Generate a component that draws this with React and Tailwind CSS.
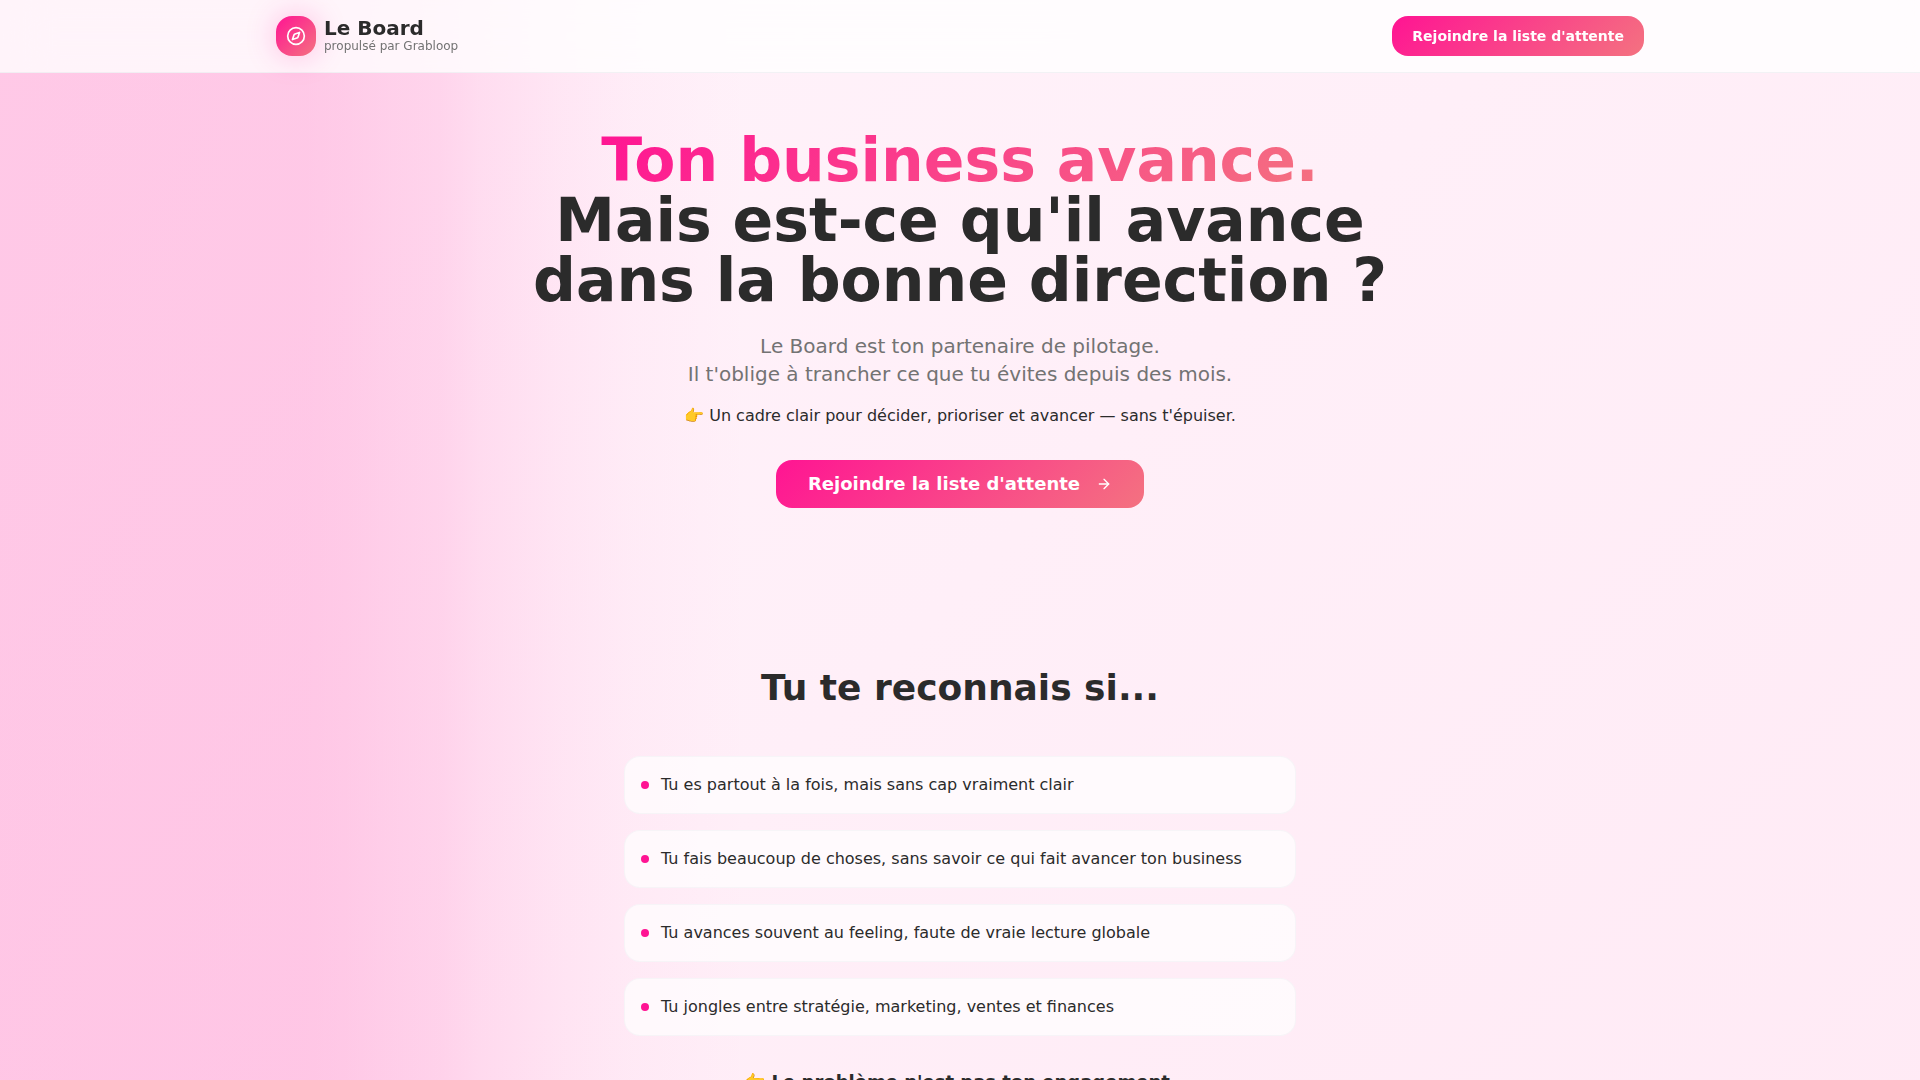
import { ArrowRight, Compass } from 'lucide-react';

const signs = [
  'Tu es partout à la fois, mais sans cap vraiment clair',
  'Tu fais beaucoup de choses, sans savoir ce qui fait avancer ton business',
  'Tu avances souvent au feeling, faute de vraie lecture globale',
  'Tu jongles entre stratégie, marketing, ventes et finances',
];

const Header = () => (
  <header className="fixed inset-x-0 top-0 z-10 border-b border-gray-200/50 bg-white/80 backdrop-blur-xl">
    <div className="mx-auto flex max-w-[1400px] items-center justify-between px-4 py-4">
      <a href="#top" className="flex items-center gap-2">
        <span className="flex h-10 w-10 items-center justify-center rounded-2xl bg-linear-135/srgb from-[#ff1493] to-[#f47280] text-white shadow-[0_0_30px_rgba(255,20,147,0.25)]">
          <Compass className="h-5 w-5" />
        </span>
        <span className="flex flex-col">
          <span className="text-xl leading-5 font-bold">Le Board</span>
          <span className="text-xs leading-4 text-[#737373]">propulsé par Grabloop</span>
        </span>
      </a>
      <button className="h-10 rounded-2xl bg-linear-135/srgb from-[#ff1493] to-[#f47280] px-5 text-sm font-bold text-white">
        Rejoindre la liste d'attente
      </button>
    </div>
  </header>
);

const Hero = () => (
  <section className="flex flex-col items-center px-4 pt-[130px] pb-20 text-center">
    <h1 className="mb-[22px] text-6xl leading-[60px] font-bold">
      <span className="bg-linear-135/srgb from-[#ff1493] to-[#f47280] bg-clip-text text-transparent">
        Ton business avance.
      </span>
      <br />
      Mais est-ce qu'il avance
      <br />
      dans la bonne direction ?
    </h1>
    <p className="mb-4 text-xl leading-7 text-[#737373]">
      Le Board est ton partenaire de pilotage.
      <br />
      Il t'oblige à trancher ce que tu évites depuis des mois.
    </p>
    <p className="mb-8 text-base">👉 Un cadre clair pour décider, prioriser et avancer — sans t'épuiser.</p>
    <button className="flex h-12 items-center gap-4 rounded-2xl bg-linear-135/srgb from-[#ff1493] to-[#f47280] px-8 text-lg font-bold text-white">
      Rejoindre la liste d'attente
      <ArrowRight className="h-4 w-4" />
    </button>
  </section>
);

const Recognition = () => (
  <section className="px-4 py-20">
    <div className="mx-auto max-w-2xl">
      <h2 className="mb-12 text-center text-4xl font-bold">Tu te reconnais si...</h2>
      <ul className="space-y-4">
        {signs.map((sign) => (
          <li
            key={sign}
            className="flex items-center gap-3 rounded-2xl border border-gray-200/30 bg-white/70 p-4"
          >
            <span className="h-2 w-2 shrink-0 rounded-full bg-[#ff1493]" />
            <span>{sign}</span>
          </li>
        ))}
      </ul>
      <p className="mt-8 text-center text-lg font-bold">👉 Le problème n'est pas ton engagement.</p>
    </div>
  </section>
);

const App = () => (
  <div
    id="top"
    className="min-h-screen bg-[linear-gradient(90deg,#ff149331_0%,#ff149330_16%,#ff14932d_18%,#ff149328_20%,#ff149322_23%,#ff149319_25%,#ff14930e_29%,#ff149306_33%,#ff149300_39%),linear-gradient(135deg,#fff4fb,#ffeff8_50%,#ffeaf5)] font-['DejaVu_Sans',Verdana,sans-serif] text-[#2b2b2b]"
  >
    <Header />
    <main>
      <Hero />
      <Recognition />
    </main>
  </div>
);

export default App;
